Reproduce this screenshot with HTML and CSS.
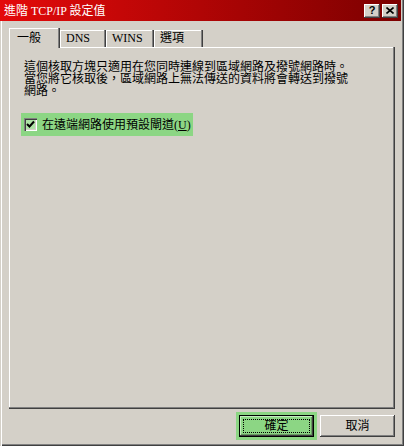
FILE: index.html
```html
<!DOCTYPE html>
<html lang="zh-Hant">
<head>
<meta charset="UTF-8">
<title>進階 TCP/IP 設定值</title>
<link rel="stylesheet" href="styles.css">
</head>
<body>

<div class="window">
  <div class="titlebar">
    <span class="title">進階 TCP/IP 設定值</span>
    <div class="titleButtons">
      <span class="tbtn helpBtn">?</span>
      <span class="tbtn closeBtn">
        <svg width="8" height="7" viewBox="0 0 8 7"><path d="M0.5 0.5 L7.5 6.5 M7.5 0.5 L0.5 6.5" stroke="#000" stroke-width="1.6" fill="none"/></svg>
      </span>
    </div>
  </div>

  <div class="content">
    <div class="tabs">
      <div class="tab active">一般</div>
      <div class="tab tabDns">DNS</div>
      <div class="tab tabWins">WINS</div>
      <div class="tab tabOptions">選項</div>
    </div>

    <div class="panel">
      <p class="note">這個核取方塊只適用在您同時連線到區域網路及撥號網路時。當您將它核取後，區域網路上無法傳送的資料將會轉送到撥號網路。</p>

      <label class="checkRow">
        <span class="checkbox">
          <svg width="9" height="9" viewBox="0 0 9 9"><path d="M1 4 L3.5 6.5 L8 1.5" stroke="#000" stroke-width="2" fill="none"/></svg>
        </span>
        <span class="checkLabel">在遠端網路使用預設閘道(<u>U</u>)</span>
      </label>
    </div>

    <div class="actions">
      <button class="btn default"><span class="focus">確定</span></button>
      <button class="btn">取消</button>
    </div>
  </div>
</div>

</body>
</html>
```

FILE: styles.css
```css
* {
  box-sizing: border-box;
}

body {
  margin: 0;
  background-color: #d4d0c8; /* classic dialog gray */
  font-family: "Liberation Serif", "Noto Sans CJK TC", serif;
  font-size: 12px;
  color: #000;
}

.window {
  width: 404px;
  height: 446px;
  display: flex;
  flex-direction: column;
  padding: 0 3px 3px 0;
  box-shadow: inset 1px 0 #d4d0c8, inset 2px 0 #fff, inset -1px -1px #404040, inset -2px -2px #808080;
}

/* Title bar */
.titlebar {
  height: 21px;
  display: flex;
  align-items: center;
  justify-content: space-between;
  padding: 0 3px 0 4px;
  background: linear-gradient(90deg, #e40a0a, #7c0000);
  color: #fff;
  line-height: 12px;
}

.titleButtons {
  display: flex;
  gap: 2px;
}

.tbtn {
  width: 16px;
  height: 14px;
  display: flex;
  align-items: center;
  justify-content: center;
  background-color: #d4d0c8;
  color: #000;
  box-shadow: inset -1px -1px #404040, inset 1px 1px #fff, inset -2px -2px #808080;
}

.helpBtn {
  font-family: "Liberation Sans", sans-serif;
  font-weight: bold;
  font-size: 11px;
  line-height: 11px;
}

/* Main area */
.content {
  flex: 1;
  display: flex;
  flex-direction: column;
  padding: 7px 6px 6px 9px;
}

.tabs {
  display: flex;
  align-items: flex-end;
  height: 19px;
  position: relative;
  z-index: 1;
}

.tab {
  height: 17px;
  padding: 2px 0 0 6px;
  line-height: 12px;
  box-shadow: inset -1px 0 #404040, inset -2px 0 #808080, inset 1px 1px #fff;
}

.tab.active {
  width: 51px;
  height: 20px;
  margin-bottom: -1px;
  padding: 4px 0 0 8px;
  background-color: #d4d0c8;
}

.tabDns { width: 46px; }
.tabWins { width: 48px; }
.tabOptions { width: 49px; }

.panel {
  flex: 1;
  padding: 14px 14px 0 15px;
  box-shadow: inset -1px -1px #404040, inset -2px -2px #808080, inset 1px 1px #fff;
}

.note {
  margin: 0;
  width: 332px;
  line-height: 12px;
}

.checkRow {
  margin: 16px 0 0 -3px;
  width: 172px;
  height: 23px;
  display: flex;
  align-items: center;
  gap: 5px;
  padding-left: 3px;
  background-color: #8cd684; /* highlighted row */
  line-height: 12px;
}

.checkbox {
  width: 13px;
  height: 13px;
  display: flex;
  align-items: center;
  justify-content: center;
  background-color: #aee2a6;
  box-shadow: inset 1px 1px #808080, inset 2px 2px #404040, inset -1px -1px #fff, inset -2px -2px #d4d0c8;
}

/* Bottom buttons */
.actions {
  display: flex;
  justify-content: flex-end;
  gap: 6px;
  margin-top: 6px;
}

.btn {
  width: 75px;
  height: 22px;
  padding: 0;
  border: none;
  font: inherit;
  line-height: 12px;
  color: #000;
  background-color: #d4d0c8;
  box-shadow: inset -1px -1px #404040, inset 1px 1px #fff, inset -2px -2px #808080;
}

.btn.default {
  padding: 4px;
  background-color: #8cd684;
  box-shadow: 0 0 0 3px #8cd684, inset 0 0 0 1px #000, inset -2px -2px #404040, inset 2px 2px #c4eebf, inset -3px -3px #6a9a64;
}

.focus {
  display: flex;
  align-items: center;
  justify-content: center;
  width: 100%;
  height: 100%;
  border: 1px dotted #000;
}
```
